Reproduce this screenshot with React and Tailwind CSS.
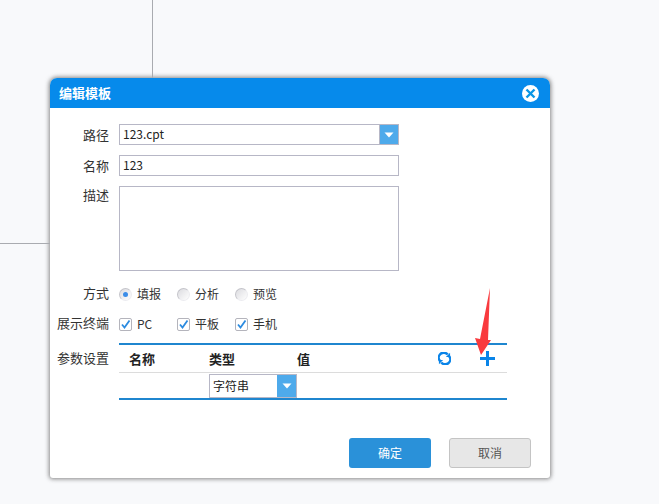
const font = { fontFamily: '"Noto Sans CJK SC", "Noto Sans", sans-serif' };

function Caret() {
  return (
    <svg width="10" height="6" viewBox="0 0 10 6">
      <path d="M0.5 0.5H9.5L5 5.5Z" fill="#fff" />
    </svg>
  );
}

function Radio({ on, label, w }) {
  return (
    <div className="flex items-center gap-[5px]" style={{ width: w }}>
      <span className="flex h-[13px] w-[13px] items-center justify-center rounded-full border border-[#c4c4ca] border-r-[#ececf0] border-b-[#ececf0] bg-gradient-to-br from-[#dcdce0] to-white">
        {on && <span className="h-[5px] w-[5px] rounded-full bg-[#3b8de8]" />}
      </span>
      <span className="text-xs leading-none text-[#333]">{label}</span>
    </div>
  );
}

function Check({ label, w }) {
  return (
    <div className="flex items-center gap-[5px]" style={{ width: w }}>
      <span className="flex h-[13px] w-[13px] items-center justify-center rounded-[2px] border border-[#b4b4bc] bg-white">
        <svg width="11" height="11" viewBox="0 0 11 11" fill="none">
          <path d="M2 5.5L4.5 8.5L9.5 1.5" stroke="#2b8be0" strokeWidth="1.8" />
        </svg>
      </span>
      <span className="text-xs leading-none text-[#333]">{label}</span>
    </div>
  );
}

function Label({ children, className = "" }) {
  return <div className={"w-[59px] shrink-0 text-right text-[13px] leading-[18px] text-[#333] " + className}>{children}</div>;
}

export default function App() {
  return (
    <div className="relative h-[504px] w-[659px] overflow-hidden bg-[#f8f9fb] pl-[50px] pt-[78px]" style={font}>
      <div className="absolute left-[152px] top-0 h-[78px] w-px bg-[#a9abb0]" />
      <div className="absolute left-0 top-[243px] h-px w-[50px] bg-[#a9abb0]" />

      <div className="flex h-[400px] w-[500px] flex-col rounded-t-[7px] rounded-b-[3px] bg-white shadow-[0_0_4px_1px_rgba(70,70,70,0.65)]">
        <div className="flex h-[30px] shrink-0 items-center justify-between rounded-t-[7px] bg-[#068aeb] pl-[9px] pr-[11px]">
          <span className="text-[13px] font-bold text-white">编辑模板</span>
          <svg width="17" height="17" viewBox="0 0 17 17" fill="none">
            <circle cx="8.5" cy="8.5" r="8.5" fill="#fff" />
            <path d="M4.5 4.5L12.5 12.5M12.5 4.5L4.5 12.5" stroke="#0a96e6" strokeWidth="2.4" />
          </svg>
        </div>

        <div className="flex flex-1 flex-col pt-4">
          <div className="flex h-[21px] items-center gap-[10px]">
            <Label>路径</Label>
            <div className="flex h-[21px] w-[280px] border border-[#b7b7c6] pl-[3px]">
              <span className="flex-1 text-xs leading-[18px] text-[#222]">123.cpt</span>
              <span className="flex w-[19px] items-center justify-center border-l border-[#b7b7c6] bg-[#4eaaeb]">
                <Caret />
              </span>
            </div>
          </div>

          <div className="mt-[10px] flex h-[21px] items-center gap-[10px]">
            <Label>名称</Label>
            <div className="h-[21px] w-[280px] border border-[#b7b7c6] pl-[3px] text-xs leading-[18px] text-[#222]">123</div>
          </div>

          <div className="mt-[10px] flex items-start gap-[10px]">
            <Label>描述</Label>
            <div className="h-[85px] w-[280px] border border-[#b7b7c6]" />
          </div>

          <div className="mt-[13px] flex h-[20px] items-center gap-[10px]">
            <Label className="pb-[3px]">方式</Label>
            <div className="flex items-center">
              <Radio on label="填报" w="58px" />
              <Radio label="分析" w="58px" />
              <Radio label="预览" w="58px" />
            </div>
          </div>

          <div className="mt-[10px] flex h-[20px] items-center gap-[10px]">
            <Label className="pb-[2px]">展示终端</Label>
            <div className="flex items-center">
              <Check label="PC" w="58px" />
              <Check label="平板" w="58px" />
              <Check label="手机" w="58px" />
            </div>
          </div>

          <div className="mt-[9px] flex items-start gap-[10px]">
            <div className="pt-[6px]"><Label>参数设置</Label></div>
            <div className="w-[388px] border-y-2 border-[#1f86cf]">
              <div className="flex h-[28px] items-center border-b border-[#dcdcdc] text-[13px] font-bold text-[#222]">
                <span className="w-[90px] pl-[10px]">名称</span>
                <span className="w-[88px]">类型</span>
                <span className="w-[141px]">值</span>
                <svg width="13" height="13" viewBox="0 0 14 14" fill="none">
                  <path d="M2 9.5A5.3 5.3 0 0 1 10.5 2.8" stroke="#0a84e8" strokeWidth="2.6" />
                  <path d="M12 4.5A5.3 5.3 0 0 1 3.5 11.2" stroke="#0a84e8" strokeWidth="2.6" />
                  <path d="M8.5 5.5H13V0.8Z M5.5 8.5H1V13.2Z" fill="#0a84e8" />
                </svg>
                <svg className="ml-[29px]" width="15" height="15" viewBox="0 0 15 15">
                  <path d="M6 0H9V6H15V9H9V15H6V9H0V6H6Z" fill="#0a84e8" />
                </svg>
              </div>
              <div className="flex h-[25px] items-center pl-[90px]">
                <div className="flex h-[24px] w-[88px] border border-[#b7b7c6]">
                  <span className="flex-1 pl-[3px] text-xs leading-[22px] text-[#222]">字符串</span>
                  <span className="flex w-[19px] items-center justify-center bg-[#4eaaeb]">
                    <Caret />
                  </span>
                </div>
              </div>
            </div>
          </div>

          <div className="mt-[38px] flex justify-end gap-[18px] pr-[19px]">
            <div className="flex h-[30px] w-[82px] items-center justify-center rounded-[3px] bg-[#2a91d9] text-xs text-white">确定</div>
            <div className="flex h-[30px] w-[82px] items-center justify-center rounded-[3px] border border-[#c4c4c4] bg-[#e7e7e7] text-xs text-[#555]">取消</div>
          </div>
        </div>
      </div>

      <svg className="absolute left-0 top-0" width="659" height="504">
        <path d="M490 288L488 340L491 340L481 355L475 338L480 339Z" fill="#f93a3e" />
      </svg>
    </div>
  );
}
